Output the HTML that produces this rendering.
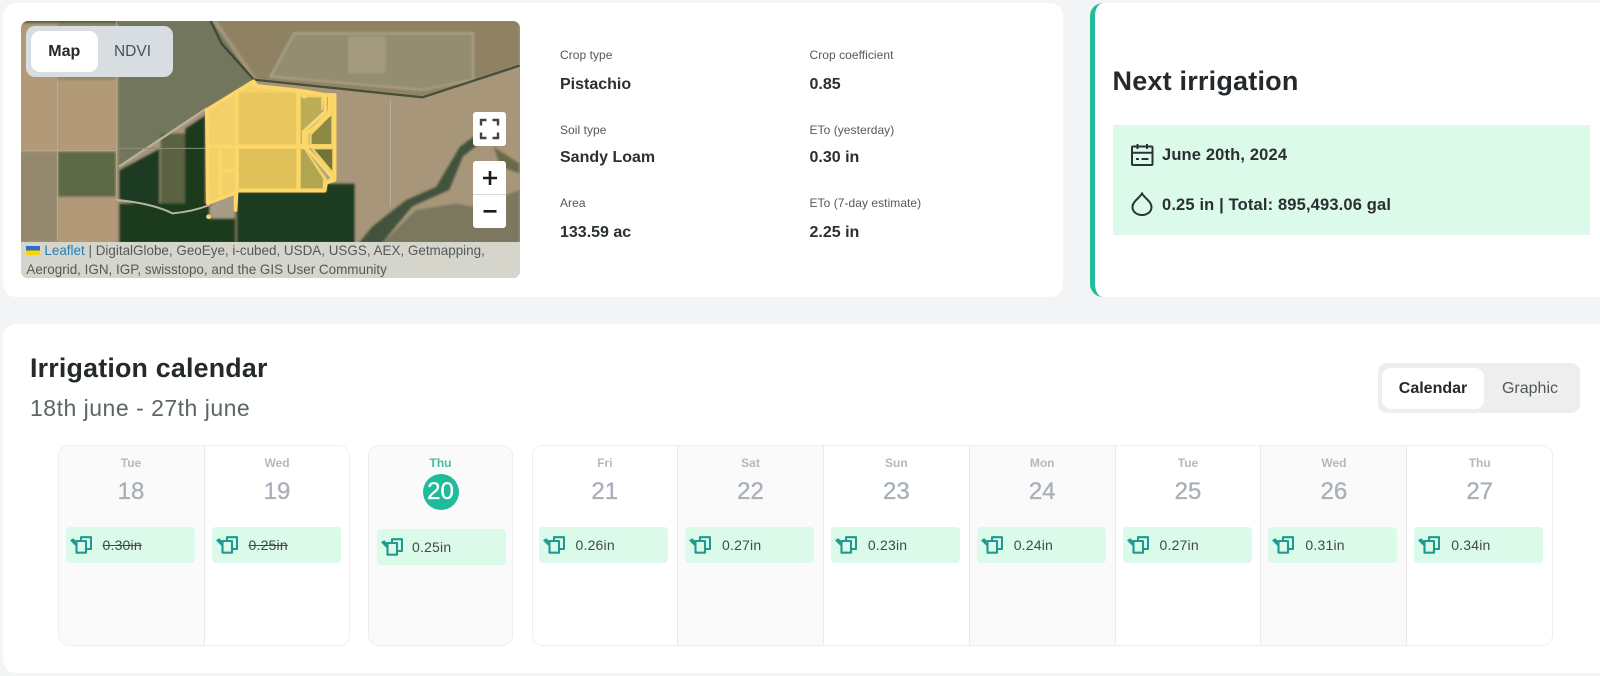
<!DOCTYPE html>
<html><head><meta charset="utf-8"><title>Irrigation</title>
<style>
*{box-sizing:border-box}
html,body{margin:0;padding:0;width:1600px;height:676px;overflow:hidden;background:#f3f4f6;font-family:"Liberation Sans",sans-serif;color:#24292b}
.a{position:absolute}
.card{position:absolute;background:#fff;border-radius:13px}
.lb{position:absolute;font-size:12px;line-height:14px;color:#53595c;white-space:nowrap;letter-spacing:.05px}
.vl{position:absolute;font-size:16px;line-height:20px;font-weight:700;color:#2a2f31;white-space:nowrap}
.col{position:absolute;top:0;height:201px;width:146px;border-left:1.5px solid #e9e9e9;background:#fff}
.col.f{border-left:0}
.g{background:#fafafa}
.d{position:absolute;left:0;right:0;top:10px;text-align:center;font-size:12px;line-height:14px;font-weight:700;color:#b3b9c0}
.n{position:absolute;left:0;right:0;top:32px;text-align:center;font-size:24px;line-height:28px;color:#a9b0b9;-webkit-text-stroke:.35px #a9b0b9}
.p{position:absolute;left:7px;top:81px;width:129px;height:36px;background:#dcfaea;border-radius:4px;font-size:14px;line-height:36px;color:#41494b;padding-left:37px;letter-spacing:.2px}
.p svg{position:absolute;left:4px;top:9px}
.s{text-decoration:line-through}
.box{position:absolute;top:445px;height:201px;border:1.5px solid #eeeeee;border-radius:11px;overflow:hidden;background:#fff}
</style></head><body>
<svg width="0" height="0" style="position:absolute"><defs>
<symbol id="can" viewBox="0 0 22 18"><g fill="none" stroke="#1f9a8e" stroke-width="2.100" stroke-linejoin="round"><rect x="6.500" y="5" width="9.500" height="11.700"/><path d="M11 5V1.200H21V13H16"/></g><path d="M0 4.300L3.200 2.300L7.400 6V11.300L3.500 8Z" fill="#1f9a8e"/></symbol>
</defs></svg>

<div class="card" style="left:3px;top:3px;width:1060px;height:294px"></div>

<div class="a" style="left:21px;top:21px;width:498.500px;height:257px;border-radius:7px;overflow:hidden">
<svg width="530" height="300" viewBox="0 0 1568 900" preserveAspectRatio="none" style="position:absolute;left:-21px;top:-21px">
<defs><filter id="b" x="-5%" y="-5%" width="110%" height="110%"><feGaussianBlur stdDeviation="3"/></filter></defs>
<g filter="url(#b)">
<rect x="40" y="40" width="1520" height="820" fill="#a8967a"/>
<rect x="40" y="40" width="310" height="30" fill="#50603f"/>
<rect x="60" y="70" width="110" height="380" fill="#b29a78"/>
<rect x="172" y="70" width="172" height="170" fill="#8f8a63"/>
<rect x="172" y="240" width="172" height="210" fill="#b29a78"/>
<rect x="60" y="455" width="108" height="270" fill="#94896e"/>
<rect x="172" y="455" width="170" height="135" fill="#5c6b47"/>
<rect x="172" y="592" width="172" height="135" fill="#b29a78"/>
<polygon points="350,60 625,60 750,240 610,325 350,505" fill="#72765c"/>
<polygon points="640,60 1537,60 1537,195 1250,290 760,238" fill="#8f8264"/>
<polygon points="800,230 870,100 1400,100 1400,240 1250,270" fill="#958d70" stroke="#b5ad95" stroke-width="4"/>
<rect x="1030" y="110" width="110" height="110" fill="#a59b80"/>
<polygon points="990,290 1250,295 1537,205 1537,730 1060,730 1100,680 990,545" fill="#a8967a"/>
<polygon points="352,510 472,445 472,625 352,600" fill="#1c3a20"/>
<rect x="475" y="400" width="72" height="225" fill="#5a6242"/>
<polygon points="547,385 608,345 608,622 547,622" fill="#1c3a1f"/>
<rect x="352" y="610" width="345" height="120" fill="#1a3a1f"/>
<polygon points="700,575 965,575 965,550 1050,550 1050,730 700,730" fill="#1c3c22"/>
<polygon points="620,615 695,590 695,655 620,655" fill="#a79d87"/>
<polygon points="1060,730 1100,680 1200,600 1290,560 1360,440 1400,410 1420,430 1370,470 1330,570 1220,620 1130,730" fill="#43533c"/>
<polygon points="1130,730 1230,630 1350,610 1400,620 1537,570 1537,730" fill="#7c7860"/>
<polygon points="1460,440 1537,490 1537,520 1480,500" fill="#6a6a4c"/>
</g>
<g fill="none">
<path d="M622 60L655 130L750 238L760 240L1250 292L1537 197" stroke="#2f3f2c" stroke-width="7" opacity=".8"/>
<path d="M352 500L612 325" stroke="#b9b29b" stroke-width="7"/>
<path d="M345 60V600M170 240V720M60 452H345" stroke="#c2b296" stroke-width="3" opacity=".7"/>
<path d="M345 600Q450 610 510 640Q570 635 620 615" stroke="#b8b7a4" stroke-width="6"/>
<path d="M1155 300V620" stroke="#c4b79e" stroke-width="3" opacity=".8"/>
<path d="M350 445H610" stroke="#8d8f76" stroke-width="3"/>
</g>
<g>
<polygon points="612,330 750,244 760,258 890,272 965,285 990,285 990,540 965,548 960,572 700,572 695,630 695,578 615,610" fill="#f3d068"/>
<polygon points="890,292 950,292 950,335 905,385 905,432 890,432" fill="#bdae56"/>
<polygon points="922,432 980,432 980,345 922,405" fill="#8d8942"/>
<polygon points="930,448 983,448 983,512" fill="#73733b"/>
<polygon points="890,448 900,448 955,535 955,565 890,565" fill="#b1a551"/>
<rect x="707" y="447" width="170" height="118" fill="#dfc059"/>
<rect x="707" y="278" width="168" height="155" fill="#e8c75f"/>
<path d="M965 290L962 330L908 388V440L975 535" fill="none" stroke="#a9a88a" stroke-width="14"/>
<path d="M612 330L750 244L760 258L890 272L965 285H990V540L965 548L960 572H700L697 630V578L615 610Z" fill="none" stroke="#fdd768" stroke-width="11" stroke-linejoin="round"/>
<path d="M700 270V575M882 272V570M612 439H990M652 445V585M655 512H700M900 280V295M975 285V345L908 400V445L985 535M962 285V335L898 395V445" fill="none" stroke="#fdd768" stroke-width="10"/>
<circle cx="617" cy="650" r="7" fill="#fdd768"/>
</g>
</svg>
<div class="a" style="left:0;top:220.500px;width:499px;height:37px;background:#d6d5cb"></div>
<div class="a" style="left:5.400px;top:221px;width:490px;font-size:13.450px;line-height:18.500px;color:#55595a;white-space:nowrap"><span style="display:inline-block;width:14px;height:9px;margin-right:4px;vertical-align:0;background:linear-gradient(#2e6fc4 50%,#ffd500 50%)"></span><span style="color:#1f7fb5">Leaflet</span> | DigitalGlobe, GeoEye, i-cubed, USDA, USGS, AEX, Getmapping,<br>Aerogrid, IGN, IGP, swisstopo, and the GIS User Community</div>
</div>

<div class="a" style="left:26px;top:26px;width:147px;height:51px;background:#d8dde2;border-radius:9px"></div>
<div class="a" style="left:30.500px;top:31px;width:67.500px;height:41px;background:#fff;border-radius:9px;text-align:center;font-size:16px;line-height:41px;font-weight:700;color:#24292b">Map</div>
<div class="a" style="left:98px;top:31px;width:69px;height:41px;text-align:center;font-size:15.500px;line-height:41px;color:#4a5256">NDVI</div>

<div class="a" style="left:473px;top:112px;width:33px;height:34px;background:#fff;border-radius:3px"></div>
<svg class="a" style="left:473px;top:112px" width="33" height="34" viewBox="0 0 33 34"><path d="M8 13.500V8H13.500M19.500 8H25V13.500M25 20.500V26H19.500M13.500 26H8V20.500" fill="none" stroke="#3f4447" stroke-width="2.400"/></svg>
<div class="a" style="left:473px;top:160.500px;width:33px;height:67.500px;background:#fff;border-radius:3px"></div>
<div class="a" style="left:473px;top:194px;width:33px;height:1px;background:#d8d8d8"></div>
<svg class="a" style="left:473px;top:160.500px" width="33" height="68" viewBox="0 0 33 68"><path d="M10 17H24M17 10V24M10.500 50.300H23.500" fill="none" stroke="#1b1b1b" stroke-width="2.600"/></svg>

<div class="lb" style="left:560px;top:48px">Crop type</div><div class="vl" style="left:560px;top:75px">Pistachio</div>
<div class="lb" style="left:560px;top:123px">Soil type</div><div class="vl" style="left:560px;top:148px">Sandy Loam</div>
<div class="lb" style="left:560px;top:196px">Area</div><div class="vl" style="left:560px;top:223px">133.59 ac</div>
<div class="lb" style="left:809.500px;top:48px">Crop coefficient</div><div class="vl" style="left:809.500px;top:75px">0.85</div>
<div class="lb" style="left:809.500px;top:123px">ETo (yesterday)</div><div class="vl" style="left:809.500px;top:148px">0.30 in</div>
<div class="lb" style="left:809.500px;top:196px">ETo (7-day estimate)</div><div class="vl" style="left:809.500px;top:223px">2.25 in</div>

<div class="a" style="left:1090px;top:3px;width:510px;height:294px;background:#fff;border-left:5px solid #22bb9b;border-radius:13px 0 0 13px"></div>
<div class="a" style="left:1112.500px;top:66px;font-size:27px;line-height:31px;font-weight:700;color:#24292b;white-space:nowrap;letter-spacing:.2px">Next irrigation</div>
<div class="a" style="left:1112.500px;top:125px;width:477px;height:110px;background:#dcfaea"></div>
<svg class="a" style="left:1129px;top:142px" width="26" height="25" viewBox="0 0 26 25"><g fill="none" stroke="#2b3335" stroke-width="2"><rect x="3" y="4.500" width="20.500" height="18.500" rx="1"/><path d="M3 10.700H23.500M8.500 2V7M18 2V7M7 17H10M12.500 17H19.500"/></g></svg>
<div class="a" style="left:1162px;top:145px;font-size:16.500px;line-height:20px;font-weight:700;color:#2a2f31;white-space:nowrap;letter-spacing:.15px">June 20th, 2024</div>
<svg class="a" style="left:1130px;top:191px" width="24" height="26" viewBox="0 0 24 26"><path d="M12 2.500C9.500 7 2.500 10.500 2.500 16C2.500 21 7 24 12 24S21.500 21 21.500 16C21.500 10.500 14.500 7 12 2.500Z" fill="none" stroke="#2b3335" stroke-width="2"/></svg>
<div class="a" style="left:1162px;top:195px;font-size:16.500px;line-height:20px;font-weight:700;color:#2a2f31;white-space:nowrap;letter-spacing:.15px">0.25 in | Total: 895,493.06 gal</div>

<div class="a" style="left:3px;top:324px;width:1597px;height:349px;background:#fff;border-radius:13px 0 0 13px"></div>
<div class="a" style="left:30px;top:352px;font-size:26.800px;line-height:32px;font-weight:700;color:#24292b;white-space:nowrap;letter-spacing:.2px">Irrigation calendar</div>
<div class="a" style="left:30px;top:395px;font-size:23px;line-height:27px;color:#5b6567;white-space:nowrap;letter-spacing:.5px">18th june - 27th june</div>
<div class="a" style="left:1378px;top:363px;width:202px;height:50px;background:#eeeeee;border-radius:9px"></div>
<div class="a" style="left:1382px;top:368px;width:102px;height:41px;background:#fff;border-radius:9px;text-align:center;font-size:16px;line-height:41px;font-weight:700;color:#24292b">Calendar</div>
<div class="a" style="left:1484px;top:368px;width:92px;height:41px;text-align:center;font-size:16px;line-height:41px;color:#50585b">Graphic</div>

<div class="box" style="left:57.500px;width:292px">
<div class="col g f" style="left:0;width:145px"><div class="d">Tue</div><div class="n">18</div><div class="p"><svg width="22" height="18"><use href="#can"/></svg><span class="s">0.30in</span></div></div>
<div class="col" style="left:145px"><div class="d">Wed</div><div class="n">19</div><div class="p"><svg width="22" height="18"><use href="#can"/></svg><span class="s">0.25in</span></div></div>
</div>

<div class="box" style="left:368px;width:145px;background:#fafafa">
<div class="d" style="color:#3fc0a0">Thu</div>
<div class="a" style="left:53.500px;top:27.500px;width:36px;height:36px;border-radius:50%;background:#1fbb9b;color:#fff;text-align:center;font-size:24px;line-height:36px;-webkit-text-stroke:.35px #fff">20</div>
<div class="p" style="top:83px;left:8px;padding-left:35px"><svg width="22" height="18"><use href="#can"/></svg>0.25in</div>
</div>

<div class="box" style="left:531.500px;width:1021px">
<div class="col f" style="left:0;width:144.500px"><div class="d">Fri</div><div class="n">21</div><div class="p" style="left:6px"><svg width="22" height="18"><use href="#can"/></svg>0.26in</div></div>
<div class="col g" style="left:144.500px"><div class="d">Sat</div><div class="n">22</div><div class="p"><svg width="22" height="18"><use href="#can"/></svg>0.27in</div></div>
<div class="col" style="left:290.400px"><div class="d">Sun</div><div class="n">23</div><div class="p"><svg width="22" height="18"><use href="#can"/></svg>0.23in</div></div>
<div class="col g" style="left:436.200px"><div class="d">Mon</div><div class="n">24</div><div class="p"><svg width="22" height="18"><use href="#can"/></svg>0.24in</div></div>
<div class="col" style="left:582px"><div class="d">Tue</div><div class="n">25</div><div class="p"><svg width="22" height="18"><use href="#can"/></svg>0.27in</div></div>
<div class="col g" style="left:727.900px"><div class="d">Wed</div><div class="n">26</div><div class="p"><svg width="22" height="18"><use href="#can"/></svg>0.31in</div></div>
<div class="col" style="left:873.700px"><div class="d">Thu</div><div class="n">27</div><div class="p"><svg width="22" height="18"><use href="#can"/></svg>0.34in</div></div>
</div>
</body></html>
